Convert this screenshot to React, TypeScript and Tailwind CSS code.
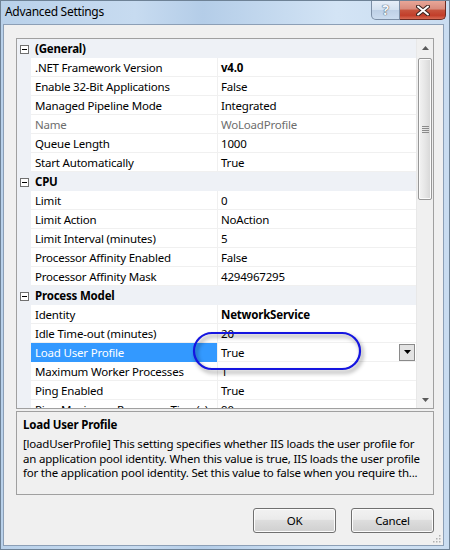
import React from 'react'

type Prop = {
  name: string
  value: string
  bold?: boolean
  readOnly?: boolean
  selected?: boolean
}

type Category = {
  title: string
  props: Prop[]
}

const categories: Category[] = [
  {
    title: '(General)',
    props: [
      { name: '.NET Framework Version', value: 'v4.0', bold: true },
      { name: 'Enable 32-Bit Applications', value: 'False' },
      { name: 'Managed Pipeline Mode', value: 'Integrated' },
      { name: 'Name', value: 'WoLoadProfile', readOnly: true },
      { name: 'Queue Length', value: '1000' },
      { name: 'Start Automatically', value: 'True' },
    ],
  },
  {
    title: 'CPU',
    props: [
      { name: 'Limit', value: '0' },
      { name: 'Limit Action', value: 'NoAction' },
      { name: 'Limit Interval (minutes)', value: '5' },
      { name: 'Processor Affinity Enabled', value: 'False' },
      { name: 'Processor Affinity Mask', value: '4294967295' },
    ],
  },
  {
    title: 'Process Model',
    props: [
      { name: 'Identity', value: 'NetworkService', bold: true },
      { name: 'Idle Time-out (minutes)', value: '20' },
      { name: 'Load User Profile', value: 'True', selected: true },
      { name: 'Maximum Worker Processes', value: '1' },
      { name: 'Ping Enabled', value: 'True' },
      { name: 'Ping Maximum Response Time(s)', value: '90' },
    ],
  },
]

function CategoryRow({ title }: { title: string }) {
  return (
    <div className="flex h-[19px] shrink-0 items-center bg-[#eef1f6] pt-[1px]">
      <div className="flex w-[14px] shrink-0 justify-center pl-[1px]">
        <div className="flex h-[9px] w-[9px] items-center justify-center border border-[#707070] bg-white">
          <div className="h-[1px] w-[5px] bg-black" />
        </div>
      </div>
      <span className="pl-[4px] font-bold">{title}</span>
    </div>
  )
}

function PropRow({ prop }: { prop: Prop }) {
  return (
    <div className="flex h-[19px] shrink-0 bg-[#eef1f6]">
      <div className="w-[14px] shrink-0" />
      <div
        className={
          prop.selected
            ? 'flex w-[186px] shrink-0 items-center overflow-hidden whitespace-nowrap border-b border-[#3399ff] bg-[#3399ff] pl-[4px] pt-[1px] text-white'
            : 'flex w-[186px] shrink-0 items-center overflow-hidden whitespace-nowrap border-b border-[#f0f0f0] bg-white pl-[4px] pt-[1px]'
        }
      >
        <span className={prop.readOnly ? 'text-[#6d6d6d]' : ''}>{prop.name}</span>
      </div>
      <div className="flex flex-1 items-center overflow-hidden whitespace-nowrap border-b border-l border-[#f0f0f0] bg-white pl-[3px]">
        <span
          className={
            prop.bold
              ? 'pt-[1px] font-bold'
              : prop.readOnly
                ? 'pt-[1px] text-[#6d6d6d]'
                : 'pt-[1px]'
          }
        >
          {prop.value}
        </span>
        {prop.selected && (
          <div className="ml-auto mr-[1px] flex h-[17px] w-[16px] items-center justify-center border border-[#8a8a8a] bg-[#e3e3e3]">
            <svg width="7" height="4" viewBox="0 0 7 4">
              <path d="M0 0h7L3.5 4z" fill="#000" />
            </svg>
          </div>
        )}
      </div>
    </div>
  )
}

function Scrollbar() {
  return (
    <div className="flex w-[17px] shrink-0 flex-col border-l border-[#e8e8e8] bg-[#f0f0f0]">
      <div className="flex h-[17px] shrink-0 items-center justify-center">
        <svg width="7" height="4" viewBox="0 0 7 4">
          <path d="M0 4h7L3.5 0z" fill="#5a5a5a" />
        </svg>
      </div>
      <div className="mx-[1px] mt-[2px] flex h-[142px] shrink-0 items-center justify-center rounded-[2px] border border-[#979797] bg-[linear-gradient(to_right,#f3f3f3,#e6e6e6_50%,#d6d6d6)] shadow-[inset_0_0_0_1px_#fbfbfb]">
        <div className="flex flex-col gap-[1px]">
          <div className="h-[1px] w-[7px] bg-[#8a8a8a]" />
          <div className="h-[1px] w-[7px] bg-[#8a8a8a]" />
          <div className="h-[1px] w-[7px] bg-[#8a8a8a]" />
          <div className="h-[1px] w-[7px] bg-[#8a8a8a]" />
        </div>
      </div>
      <div className="flex-1" />
      <div className="flex h-[17px] shrink-0 items-center justify-center">
        <svg width="7" height="4" viewBox="0 0 7 4">
          <path d="M0 0h7L3.5 4z" fill="#5a5a5a" />
        </svg>
      </div>
    </div>
  )
}

function DialogButton({ label }: { label: string }) {
  return (
    <button className="flex h-[25px] w-[83px] items-center justify-center rounded-[3px] border border-[#707070] bg-[linear-gradient(to_bottom,#f2f2f2,#ebebeb_45%,#dddddd_50%,#cfcfcf)] text-black shadow-[inset_0_0_0_1px_#fcfcfc]">
      {label}
    </button>
  )
}

export default function App() {
  return (
    <div className="relative flex h-[550px] w-[450px] flex-col overflow-hidden border border-[#6e8296] bg-[linear-gradient(to_right,#b9d1ea,#c7dbf0_30%,#b4cde8_45%,#d3e4f5_75%,#c9dcf0)] font-['Noto_Sans',sans-serif] text-[11.5px] leading-none tracking-[-0.2px] text-black">
      {/* Title bar */}
      <div className="flex h-[23px] shrink-0 items-start">
        <span className="pl-[4px] pt-[5px] text-[12px] tracking-[-0.3px] text-black">Advanced Settings</span>
        <div className="ml-auto mr-[3px] flex">
          <div className="flex h-[19px] w-[29px] items-center justify-center rounded-bl-[5px] border border-t-0 border-[#7c8ea5] bg-[linear-gradient(to_bottom,#e6eef8,#d3e0ef_50%,#bed0e6_51%,#cbdcef)]">
            <span className="text-[14px] font-bold text-[#f4f7fb] [text-shadow:0_0_1px_#3d4b5d,0_0_1px_#3d4b5d]">?</span>
          </div>
          <div className="flex h-[19px] w-[46px] items-center justify-center rounded-br-[5px] border border-l-0 border-t-0 border-[#6b2a22] bg-[linear-gradient(to_bottom,#e8a698,#d88b7c_45%,#c7543e_50%,#c23e2a_80%,#d76b54)]">
            <svg width="14" height="11" viewBox="0 0 14 11">
              <path d="M2 1.5l10 8M12 1.5l-10 8" stroke="#3a2420" strokeWidth="4" strokeLinecap="round" />
              <path d="M2 1.5l10 8M12 1.5l-10 8" stroke="#ffffff" strokeWidth="2" strokeLinecap="round" />
            </svg>
          </div>
        </div>
      </div>

      {/* Client area */}
      <div className="mb-[3px] ml-[2px] mr-[5px] flex flex-1 flex-col border border-[#8c9fb6] bg-[#f0f0f0] pl-[12px] pr-[9px] pt-[13px]">
        {/* Property grid */}
        <div className="flex h-[371px] shrink-0 border border-[#a0a0a0] bg-white">
          <div className="flex flex-1 flex-col overflow-hidden">
            {categories.map((cat) => (
              <React.Fragment key={cat.title}>
                <CategoryRow title={cat.title} />
                {cat.props.map((p) => (
                  <PropRow key={p.name} prop={p} />
                ))}
              </React.Fragment>
            ))}
          </div>
          <Scrollbar />
        </div>

        {/* Description */}
        <div className="mt-[2px] flex h-[84px] shrink-0 flex-col overflow-hidden border border-[#a0a0a0] bg-[#f0f0f0] px-[6px] pt-[5px]">
          <span className="font-bold leading-[16px]">Load User Profile</span>
          <div className="mt-[4px] flex flex-col whitespace-nowrap leading-[14.5px]">
            <span>[loadUserProfile] This setting specifies whether IIS loads the user profile for</span>
            <span>an application pool identity. When this value is true, IIS loads the user profile</span>
            <span>for the application pool identity. Set this value to false when you require th...</span>
          </div>
        </div>

        {/* Buttons */}
        <div className="mt-[13px] flex justify-end gap-[15px]">
          <DialogButton label="OK" />
          <DialogButton label="Cancel" />
        </div>
        <div className="mb-[2px] mr-[-7px] mt-auto flex justify-end">
          <svg width="8" height="8" viewBox="0 0 8 8">
            <rect x="6" y="0" width="1.5" height="1.5" fill="#b0b0b0" />
            <rect x="3" y="3" width="1.5" height="1.5" fill="#b0b0b0" />
            <rect x="6" y="3" width="1.5" height="1.5" fill="#b0b0b0" />
            <rect x="0" y="6" width="1.5" height="1.5" fill="#b0b0b0" />
            <rect x="3" y="6" width="1.5" height="1.5" fill="#b0b0b0" />
            <rect x="6" y="6" width="1.5" height="1.5" fill="#b0b0b0" />
          </svg>
        </div>
      </div>

      {/* Annotation oval */}
      <svg
        className="absolute left-[191px] top-[330px] drop-shadow-[2px_3px_2px_rgba(0,0,0,0.45)]"
        width="172"
        height="42"
        viewBox="0 0 172 42"
      >
        <rect x="2" y="2" width="166" height="36" rx="18" fill="none" stroke="#1515e0" strokeWidth="2.2" />
      </svg>
    </div>
  )
}
